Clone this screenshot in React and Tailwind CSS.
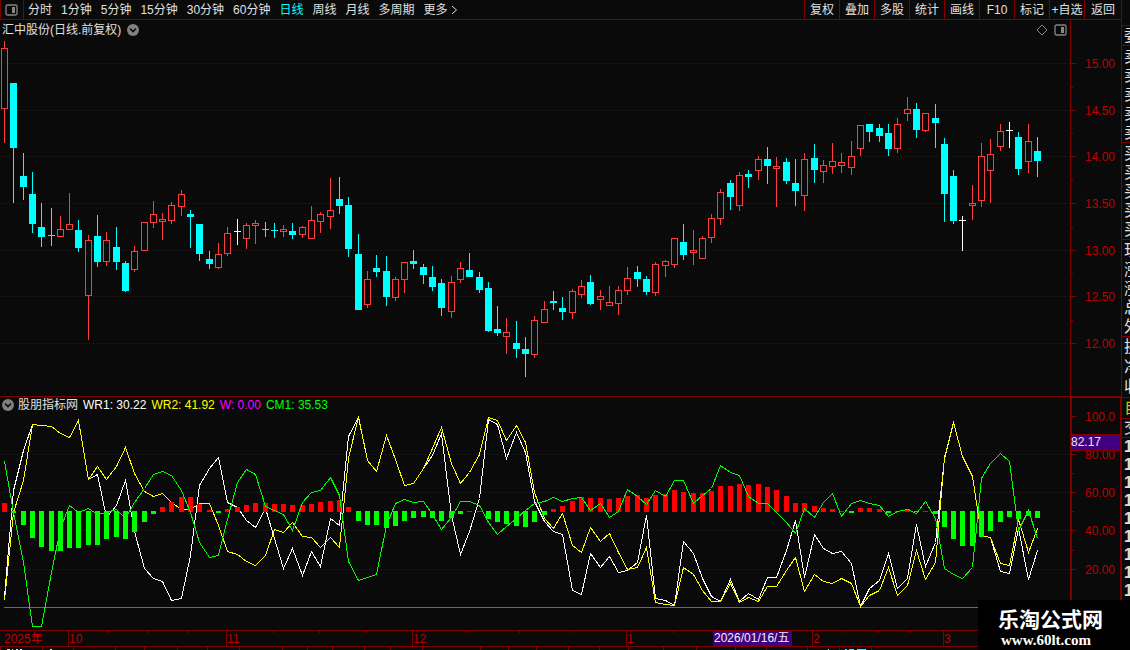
import { useState } from "react";

const RED = "#800000";
const LABEL = "#c00000";

const periods = ["分时", "1分钟", "5分钟", "15分钟", "30分钟", "60分钟", "日线", "周线", "月线", "多周期", "更多"];
const tools = ["复权", "叠加", "多股", "统计", "画线", "F10", "标记", "+自选", "返回"];

// [high, bodyTop, bodyBottom, low, kind] r = up, c = down, w = flat
const candles = [
  [41, 48, 109, 143, "r"], [83, 83, 148, 203, "c"], [153, 176, 187, 200, "c"], [172, 194, 224, 233, "c"],
  [203, 227, 237, 247, "c"], [208, 235, 236, 246, "c"], [216, 229, 237, 237, "r"], [193, 224, 230, 230, "r"],
  [220, 230, 248, 252, "c"], [235, 240, 296, 340, "r"], [215, 236, 262, 267, "c"], [232, 240, 262, 266, "r"],
  [227, 247, 262, 270, "c"], [261, 263, 291, 292, "c"], [246, 251, 270, 272, "r"], [222, 222, 251, 251, "r"],
  [201, 214, 223, 228, "r"], [213, 219, 222, 240, "r"], [202, 205, 221, 224, "r"], [190, 194, 207, 216, "r"],
  [210, 214, 217, 248, "c"], [224, 224, 254, 261, "c"], [251, 259, 264, 269, "c"], [243, 254, 268, 269, "r"],
  [227, 233, 254, 256, "r"], [219, 231, 232, 245, "w"], [223, 225, 239, 249, "r"], [220, 223, 226, 244, "r"],
  [222, 229, 230, 237, "c"], [223, 230, 231, 238, "c"], [225, 229, 232, 237, "r"], [223, 231, 235, 239, "c"],
  [226, 227, 235, 238, "r"], [206, 220, 239, 239, "r"], [212, 214, 222, 233, "r"], [178, 210, 217, 229, "r"],
  [177, 199, 206, 214, "c"], [197, 205, 249, 257, "c"], [234, 254, 310, 310, "c"], [271, 279, 305, 308, "r"],
  [255, 268, 272, 277, "c"], [256, 271, 297, 306, "c"], [277, 279, 298, 301, "r"], [262, 262, 280, 293, "r"],
  [250, 261, 264, 269, "c"], [264, 267, 275, 284, "c"], [266, 277, 287, 291, "c"], [279, 283, 308, 316, "c"],
  [276, 282, 312, 318, "r"], [262, 268, 280, 283, "r"], [253, 270, 277, 277, "c"], [272, 277, 290, 293, "c"],
  [282, 288, 331, 332, "c"], [306, 329, 333, 336, "c"], [318, 332, 337, 354, "r"], [321, 343, 349, 358, "c"],
  [337, 349, 354, 377, "c"], [316, 320, 355, 358, "r"], [301, 309, 323, 323, "r"], [291, 301, 303, 310, "c"],
  [297, 308, 312, 320, "c"], [289, 291, 313, 319, "r"], [280, 286, 295, 298, "r"], [275, 282, 304, 305, "c"],
  [290, 296, 300, 310, "r"], [286, 302, 306, 306, "r"], [286, 290, 304, 315, "r"], [267, 278, 291, 295, "r"],
  [266, 272, 279, 287, "c"], [276, 279, 292, 295, "c"], [262, 264, 293, 296, "r"], [260, 261, 266, 277, "r"],
  [238, 238, 265, 268, "r"], [224, 242, 255, 260, "c"], [230, 250, 253, 265, "r"], [236, 238, 259, 259, "r"],
  [214, 218, 238, 243, "r"], [189, 192, 219, 225, "r"], [180, 183, 197, 210, "c"], [172, 175, 206, 211, "r"],
  [170, 174, 177, 188, "c"], [156, 159, 171, 180, "r"], [147, 159, 166, 184, "c"], [157, 166, 169, 207, "r"],
  [158, 162, 181, 184, "c"], [159, 183, 191, 206, "c"], [153, 159, 196, 211, "r"], [144, 158, 170, 183, "c"],
  [160, 165, 172, 183, "r"], [143, 161, 167, 174, "r"], [153, 162, 166, 173, "r"], [141, 156, 168, 175, "r"],
  [125, 125, 149, 156, "r"], [124, 124, 132, 142, "c"], [124, 128, 136, 142, "c"], [124, 133, 149, 156, "c"],
  [118, 124, 149, 153, "r"], [97, 109, 114, 121, "r"], [103, 109, 130, 138, "c"], [113, 113, 131, 132, "r"],
  [104, 118, 123, 148, "c"], [138, 144, 194, 222, "c"], [170, 176, 221, 224, "c"], [216, 220, 221, 251, "w"],
  [185, 203, 206, 220, "r"], [143, 156, 201, 207, "r"], [139, 154, 171, 203, "r"], [124, 131, 147, 151, "r"],
  [122, 130, 131, 148, "w"], [132, 137, 169, 175, "c"], [124, 141, 162, 173, "r"], [137, 151, 161, 177, "c"],
];

const wr1 = [
  596, 490, 450, 424, 425, 426, 433, 437, 420, 479, 474, 517, 505, 480, 531, 568, 578, 581, 600, 598, 555, 485, 468, 457,
  502, 507, 520, 527, 508, 538, 568, 548, 575, 551, 566, 518, 525, 436, 417, 460, 471, 435, 459, 485, 483, 468, 455, 433,
  515, 554, 531, 498, 419, 424, 458, 432, 452, 501, 521, 531, 534, 590, 594, 553, 567, 556, 572, 570, 562, 515, 598, 600,
  605, 541, 553, 578, 596, 601, 579, 601, 593, 599, 577, 577, 550, 520, 577, 534, 548, 553, 551, 563, 606, 588, 580, 553,
  588, 578, 524, 566, 542, 458, 422, 456, 476, 535, 537, 571, 573, 528, 579, 550,
];

const wr2 = [
  600, 512, 480, 424, 425, 426, 433, 437, 420, 479, 466, 479, 466, 447, 473, 491, 496, 493, 502, 509, 509, 503, 503, 525,
  551, 554, 561, 565, 555, 529, 532, 522, 536, 537, 547, 537, 547, 458, 416, 460, 471, 435, 459, 485, 483, 468, 448, 427,
  463, 483, 472, 454, 417, 420, 440, 425, 442, 492, 518, 528, 513, 545, 552, 527, 541, 533, 552, 569, 567, 547, 602, 604,
  605, 567, 574, 590, 601, 601, 583, 602, 597, 601, 586, 586, 570, 557, 591, 574, 581, 583, 578, 583, 606, 595, 590, 567,
  595, 585, 550, 579, 562, 457, 422, 456, 476, 535, 537, 563, 565, 519, 552, 528,
];

const cm1 = [
  461, 512, 562, 626, 626, 572, 528, 505, 512, 508, 514, 512, 509, 518, 502, 488, 474, 471, 475, 490, 512, 542, 557, 555,
  519, 482, 469, 474, 506, 510, 514, 530, 502, 492, 490, 477, 495, 561, 580, 577, 574, 525, 503, 499, 502, 501, 514, 529,
  517, 501, 501, 505, 522, 534, 526, 518, 510, 503, 501, 497, 501, 498, 497, 510, 503, 517, 511, 489, 496, 504, 490, 496,
  480, 480, 503, 495, 488, 465, 472, 475, 496, 503, 503, 512, 522, 533, 508, 517, 502, 493, 516, 503, 500, 503, 505, 516,
  511, 509, 513, 501, 518, 568, 574, 578, 567, 478, 463, 453, 461, 530, 510, 538,
];

// values up to 511 rise from the midline, larger ones hang below it
const bars = [
  503, 513, 525, 538, 547, 551, 551, 548, 548, 545, 545, 539, 537, 539, 532, 522, 514, 507, 502, 497, 497, 504, 510, 513,
  509, 507, 505, 503, 503, 504, 504, 505, 505, 504, 502, 501, 500, 507, 521, 525, 525, 528, 526, 521, 518, 517, 518, 521,
  518, 514, 511, 511, 519, 522, 524, 526, 527, 522, 515, 509, 506, 501, 497, 498, 498, 499, 498, 496, 495, 498, 495, 494,
  490, 492, 493, 493, 491, 486, 486, 484, 485, 484, 487, 490, 496, 503, 503, 506, 508, 509, 511, 513, 508, 508, 509, 513,
  511, 509, 512, 511, 514, 527, 539, 546, 546, 537, 531, 522, 517, 519, 516, 518,
];

const priceTicks = [[63, "15.00"], [110, "14.50"], [156, "14.00"], [203, "13.50"], [250, "13.00"], [296, "12.50"], [343, "12.00"]];
const priceMinor = [87, 133, 180, 227, 273, 320];
const wrTicks = [[416, "100.0"], [454, "80.00"], [492, "60.00"], [530, "40.00"], [569, "20.00"]];
const wrMinor = [473, 511, 550];

const months = [[68, "10"], [226, "11"], [412, "12"], [626, "1"], [812, "2"], [943, "3"]];
const weeks = [108, 147, 187, 273, 319, 366, 466, 519, 573, 673, 845, 878, 910];
const footTicks = [0, 42, 73, 115, 144, 177, 207, 239, 282, 307, 332, 364, 390, 422, 480, 508, 536, 568, 599, 628, 663, 696, 735, 766, 807, 839, 871];

const sideGroups = [
  { rows: ["委"], box: "h-5", row: "h-[19px]" },
  { rows: ["卖", "卖", "卖", "卖", "卖"], box: "h-[97px] pt-px", row: "h-[19px]" },
  { rows: ["买", "买", "买", "买", "买"], box: "h-[97px] pt-px", row: "h-[19px]" },
  { rows: ["现", "涨", "涨", "总", "外"], box: "h-[97px] pt-px", row: "h-[19px]" },
  { rows: ["换", "净", "收"], box: "h-[61px]", row: "h-5" },
  { rows: ["自"], box: "h-[21px] text-[#c8c800]", row: "h-5" },
  { rows: ["交"], box: "h-[19px]", row: "h-[18px]" },
  { rows: ["1", "1", "1", "1", "1", "1", "1", "1", "1"], box: "font-bold", row: "h-[18px]" },
];

const xAt = (i) => Math.round(4 + i * 9.305);
const points = (values) => values.map((y, i) => `${xAt(i) + 0.5},${y + 0.5}`).join(" ");

function GridLines({ rows }) {
  return rows.map((y) => (
    <line key={y} x1="1" x2="100%" y1={y + 0.5} y2={y + 0.5} stroke={RED} strokeDasharray="1 3" />
  ));
}

function Candle({ x, data }) {
  const [high, top, bottom, low, kind] = data;
  if (kind === "r") {
    return (
      <g fill="#ff3c3c">
        <rect x={x} y={high} width="1" height={top - high} />
        <rect x={x} y={bottom} width="1" height={low - bottom} />
        <rect x={x - 2.5} y={top + 0.5} width="6" height={bottom - top - 1} fill="none" stroke="#ff3c3c" />
      </g>
    );
  }
  return (
    <g fill={kind === "w" ? "#ffffff" : "#00ffff"}>
      <rect x={x} y={high} width="1" height={low - high} />
      <rect x={x - 3} y={top} width="7" height={bottom - top} />
    </g>
  );
}

function PanelIcon({ className }) {
  return (
    <svg className={className} width="13" height="12" viewBox="0 0 13 12" aria-hidden="true">
      <rect x="1" y="1" width="11" height="10" rx="1.5" fill="none" stroke="#858585" strokeWidth="1.3" />
      <rect x="7" y="3" width="3" height="6" fill="#858585" />
    </svg>
  );
}

function RoundToggle({ label }) {
  return (
    <button type="button" aria-label={label} className="shrink-0">
      <svg width="12" height="12" viewBox="0 0 12 12" className="block">
        <circle cx="6" cy="6" r="6" fill="#808080" />
        <path d="M3 4.5 L6 7.5 L9 4.5" fill="none" stroke="#0a0a0a" strokeWidth="1.6" />
      </svg>
    </button>
  );
}

function TopBar() {
  const [active, setActive] = useState("日线");

  return (
    <header className="flex h-5 items-stretch justify-between border-b border-[#800000]">
      <nav className="flex">
        <button type="button" aria-label="侧栏" className="flex w-6 items-center border-x border-[#800000] pl-1">
          <PanelIcon />
        </button>
        <div className="flex items-center gap-[9px] pl-1">
          {periods.map((name) => (
            <button
              key={name}
              type="button"
              onClick={() => setActive(name)}
              className={`flex items-center whitespace-nowrap ${active === name ? "text-[#00ffff]" : ""}`}
            >
              {name}
              {name === "更多" && (
                <svg width="12" height="12" viewBox="0 0 12 12" aria-hidden="true">
                  <path d="M4 2 L8.500 6 L4 10" fill="none" stroke="#e0e0e0" />
                </svg>
              )}
            </button>
          ))}
        </div>
      </nav>
      <nav className="flex">
        {tools.map((name) => (
          <button
            key={name}
            type="button"
            className="w-[35px] whitespace-nowrap border-l border-[#800000] text-center last:w-[37px]"
          >
            {name}
          </button>
        ))}
      </nav>
    </header>
  );
}

function PricePanel() {
  return (
    <section className="flex h-[376px]">
      <div className="min-w-0 flex-1">
        <div className="flex h-5 items-center justify-between pr-[3px] pl-[2px]">
          <div className="flex items-center gap-[6px]">
            <h1>汇中股份(日线.前复权)</h1>
            <RoundToggle label="股票菜单" />
          </div>
          <div className="flex items-center gap-[6px]">
            <svg width="12" height="12" viewBox="0 0 12 12" aria-hidden="true">
              <path d="M6 1 L11 6 L6 11 L1 6 Z" fill="none" stroke="#858585" />
            </svg>
            <PanelIcon />
          </div>
        </div>
        <svg className="block h-[356px] w-full" shapeRendering="crispEdges">
          <g transform="translate(0 -40)">
            <GridLines rows={priceTicks.map((t) => t[0])} />
            {candles.map((c, i) => (
              <Candle key={i} x={xAt(i)} data={c} />
            ))}
          </g>
        </svg>
      </div>
      <svg className="block h-[376px] w-[51px] shrink-0" shapeRendering="crispEdges">
        <g transform="translate(0 -20)">
          <rect x="0" y="20" width="1" height="376" fill={RED} />
          {priceTicks.map(([y, text]) => (
            <g key={y}>
              <rect x="1" y={y} width="5" height="1" fill={RED} />
              <text x="15" y={y + 5} fill={LABEL}>{text}</text>
            </g>
          ))}
          {priceMinor.map((y) => (
            <rect key={y} x="1" y={y} width="2" height="1" fill={RED} />
          ))}
        </g>
      </svg>
    </section>
  );
}

function IndicatorPanel() {
  return (
    <section className="flex h-[234px] border-t border-[#800000]">
      <div className="min-w-0 flex-1">
        <div className="flex h-4 items-center gap-[5px] pl-[2px] whitespace-nowrap">
          <div className="flex items-center gap-1">
            <RoundToggle label="指标菜单" />
            <h2>股朋指标网</h2>
          </div>
          <span className="text-white">WR1: 30.22</span>
          <span className="text-[#ffff00]">WR2: 41.92</span>
          <span className="text-[#ff00ff]">W: 0.00</span>
          <span className="text-[#00ff00]">CM1: 35.53</span>
        </div>
        <svg className="block h-[217px] w-full" shapeRendering="crispEdges">
          <g transform="translate(0 -413)" fill="none">
            <GridLines rows={wrTicks.slice(1).map((t) => t[0])} />
            <line x1="4" x2="100%" y1="607.5" y2="607.5" stroke="#ff00ff" />
            <polyline points={points(wr1)} stroke="#ffffff" />
            <polyline points={points(wr2)} stroke="#ffff00" />
            {bars.map((v, i) =>
              v > 511 ? (
                <rect key={i} x={xAt(i) - 2} y="511" width="5" height={v - 511} fill="#00ff00" />
              ) : (
                <rect key={i} x={xAt(i) - 2} y={v} width="5" height={512 - v} fill="#ff0000" />
              )
            )}
            <polyline points={points(cm1)} stroke="#00ff00" />
          </g>
        </svg>
      </div>
      <svg className="block h-[233px] w-[51px] shrink-0" shapeRendering="crispEdges">
        <g transform="translate(0 -397)">
          <rect x="0" y="397" width="2" height="233" fill={RED} />
          <rect x="50" y="397" width="1" height="233" fill={RED} />
          <rect x="0" y="397" width="51" height="1" fill={RED} />
          {wrTicks.map(([y, text]) => (
            <g key={y}>
              <rect x="2" y={y} width="4" height="1" fill={RED} />
              <text x="15" y={y + 5} fill={LABEL}>{text}</text>
            </g>
          ))}
          {wrMinor.map((y) => (
            <rect key={y} x="2" y={y} width="2" height="1" fill={RED} />
          ))}
          <rect x="2" y="434" width="48" height="16" fill="#400080" />
          <rect x="2" y="434" width="48" height="1" fill={RED} />
          <rect x="2" y="450" width="48" height="1" fill={RED} />
          <text x="1" y="446" fill="#e8e8e8">82.17</text>
        </g>
      </svg>
    </section>
  );
}

function DateAxis() {
  return (
    <svg className="block h-5 w-full" shapeRendering="crispEdges">
      <g fill={RED}>
        <rect x="0" y="0" width="100%" height="1" />
        <rect x="0" y="16" width="100%" height="1" />
        {weeks.map((x) => (
          <rect key={x} x={x} y="1" width="1" height="2" />
        ))}
        {footTicks.map((x) => (
          <rect key={x} x={x} y="17" width="1" height="3" />
        ))}
      </g>
      <text x="4" y="13" fill={LABEL}>2025年</text>
      {months.map(([x, text]) => (
        <g key={x}>
          <rect x={x} y="1" width="1" height="15" fill={RED} />
          <text x={x + 1} y="13" fill={LABEL}>{text}</text>
        </g>
      ))}
      <rect x="713" y="1" width="79" height="15" fill="#400080" />
      <text x="714" y="12" fill="#f0f0f0">2026/01/16/五</text>
      <path d="M7 19.500 H10 M12 19.500 H13 M16 19.500 H18 M20 19.500 H22 M50 19.500 H52 M828 19.500 H829" stroke="#e0e0e0" />
      <path d="M845 19.500 H847 M849 19.500 H854 M857 19.500 H866" stroke="#00ffff" />
    </svg>
  );
}

function SideStrip() {
  return (
    <aside className="w-[9px] shrink-0 overflow-hidden border-l border-[#800000] pt-[25px] text-base">
      {sideGroups.map((group, i) => (
        <ul key={i} className={`border-t border-[#800000] ${group.box}`}>
          {group.rows.map((text, j) => (
            <li key={j} className={`flex items-center pl-[2px] leading-none ${group.row}`}>
              {text}
            </li>
          ))}
        </ul>
      ))}
    </aside>
  );
}

export default function App() {
  return (
    <div className="relative flex min-h-screen bg-[#0a0a0a] font-['Liberation_Sans','Noto_Sans_CJK_SC',sans-serif] text-xs text-[#e0e0e0]">
      <main className="min-w-0 flex-1">
        <TopBar />
        <PricePanel />
        <IndicatorPanel />
        <DateAxis />
      </main>
      <SideStrip />
      {/* Site badge over the bottom right corner */}
      <div className="absolute right-0 bottom-0 flex h-[50px] w-[152px] flex-col bg-black pt-2 pl-5 text-white">
        <strong className="text-[21px] leading-6">乐淘公式网</strong>
        <span className="pl-[3px] font-['Liberation_Serif',serif] text-[15px] leading-4 font-bold">www.60lt.com</span>
      </div>
    </div>
  );
}
